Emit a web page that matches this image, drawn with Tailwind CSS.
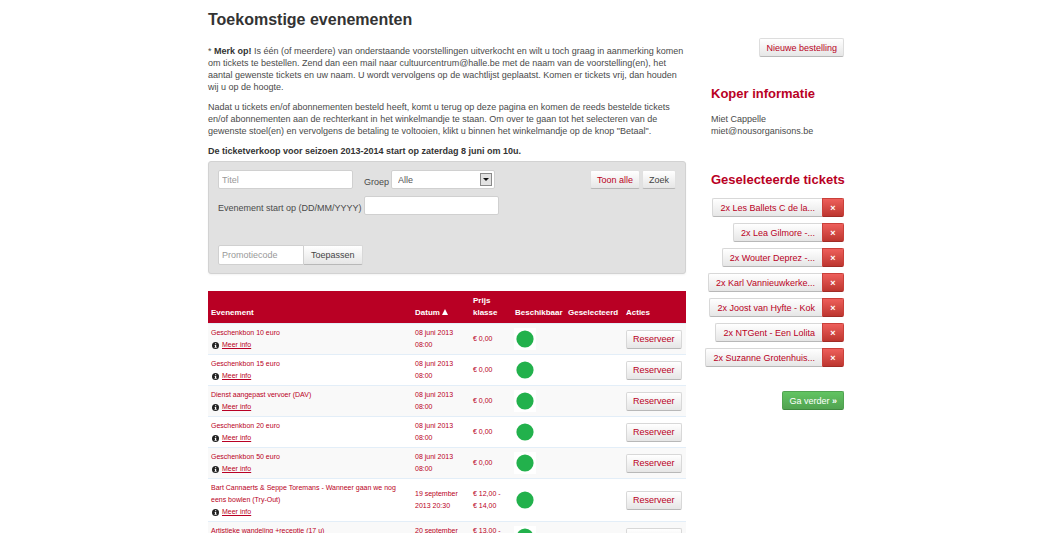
<!DOCTYPE html>
<html lang="nl">
<head>
<meta charset="utf-8">
<meta name="viewport" content="width=device-width, initial-scale=1">
<title>Toekomstige evenementen</title>
<script src="https://cdn.jsdelivr.net/npm/@tailwindcss/browser@4"></script>
</head>
<body class="bg-white text-[9px] leading-3 text-[#4a4a4a] font-['Liberation_Sans',Arial,sans-serif]">
<div class="mx-auto flex max-w-[647px] items-start justify-between pl-[11px]">
  <main class="w-[478px]">
    <h1 class="pt-2 text-[16px] leading-6 font-bold text-[#333]">Toekomstige evenementen</h1>
    <div class="mt-[13px] space-y-2">
      <p>* <strong class="text-[#333]">Merk op!</strong> Is één (of meerdere) van onderstaande voorstellingen uitverkocht en wilt u toch graag in aanmerking komen om tickets te bestellen. Zend dan een mail naar cultuurcentrum@halle.be met de naam van de voorstelling(en), het aantal gewenste tickets en uw naam. U wordt vervolgens op de wachtlijst geplaatst. Komen er tickets vrij, dan houden wij u op de hoogte.</p>
      <p>Nadat u tickets en/of abonnementen besteld heeft, komt u terug op deze pagina en komen de reeds bestelde tickets en/of abonnementen aan de rechterkant in het winkelmandje te staan. Om over te gaan tot het selecteren van de gewenste stoel(en) en vervolgens de betaling te voltooien, klikt u binnen het winkelmandje op de knop "Betaal".</p>
      <p class="font-bold text-[#333]">De ticketverkoop voor seizoen 2013-2014 start op zaterdag 8 juni om 10u.</p>
    </div>

    <form class="mt-1 rounded-[3px] border border-[#d2d2d2] bg-[#e1e1e1] px-[9px] py-2 shadow-xs">
      <div class="flex items-start justify-between">
        <div class="flex items-center">
          <input type="text" aria-label="Titel" placeholder="Titel" class="h-[19px] w-[135px] rounded-[2px] border border-[#d0d0d0] bg-white px-[3px] placeholder:text-[#999]">
          <label for="groep" class="mr-[2px] ml-[11px] pt-1">Groep</label>
          <div class="relative">
            <select id="groep" class="h-[19px] w-[104px] appearance-none rounded-[2px] border border-[#d0d0d0] bg-white px-[6px] text-[#555]"><option>Alle</option></select>
            <svg class="pointer-events-none absolute top-[3px] right-[3px] h-[13px] w-3" viewBox="0 0 12 13"><rect x=".5" y=".5" width="11" height="12" fill="#e2e2e2" stroke="#8a8a8a"/><path d="M3 5h6L6 8z" fill="#111"/></svg>
          </div>
        </div>
        <div class="flex gap-[2px]">
          <button type="button" class="h-[19px] rounded-[2px] border border-[#e0e0e0] border-b-[#b8b8b8] bg-linear-to-b from-white to-[#e6e6e6] px-[6px] text-[#b90024]">Toon alle</button>
          <button type="submit" class="h-[19px] rounded-[2px] border border-[#e0e0e0] border-b-[#b8b8b8] bg-linear-to-b from-white to-[#e6e6e6] px-[6px] text-[#444]">Zoek</button>
        </div>
      </div>
      <div class="mt-[7px] flex items-center gap-[2px]">
        <label for="datum" class="pt-1">Evenement start op (DD/MM/YYYY)</label>
        <input id="datum" type="text" class="h-[19px] w-[135px] rounded-[2px] border border-[#d0d0d0] bg-white px-[3px]">
      </div>
      <div class="mt-[30px] flex">
        <input type="text" aria-label="Promotiecode" placeholder="Promotiecode" class="h-5 w-[86px] rounded-l-[2px] border border-[#d0d0d0] bg-white px-[3px] placeholder:text-[#999]">
        <button type="button" class="h-5 rounded-r-[2px] border border-l-0 border-[#d8d8d8] border-b-[#b8b8b8] bg-linear-to-b from-white to-[#e6e6e6] px-[7px] text-[#444]">Toepassen</button>
      </div>
    </form>

    <table class="mt-[17px] w-full table-fixed border-collapse text-[7px] text-[#b90024]">
      <colgroup><col class="w-[204px]"><col class="w-[58px]"><col class="w-[42px]"><col class="w-[53px]"><col class="w-[58px]"><col></colgroup>
      <thead>
        <tr class="h-8 bg-[#b90024] text-left align-bottom text-[8px] text-white">
          <th class="px-[3px] pb-1">Evenement</th>
          <th class="px-[3px] pb-1">Datum <svg class="inline h-[6px] w-[6px] align-baseline" viewBox="0 0 6 6"><path d="M3 0l3 6H0z" fill="#fff"/></svg></th>
          <th class="px-[3px] pt-1 pb-1">Prijs klasse</th>
          <th class="px-[3px] pb-1">Beschikbaar</th>
          <th class="px-[3px] pb-1">Geselecteerd</th>
          <th class="px-[3px] pb-1">Acties</th>
        </tr>
      </thead>
      <tbody id="events"></tbody>
    </table>
  </main>

  <aside class="flex w-[140px] flex-col items-end pt-[38px]">
    <button type="button" class="h-[19px] rounded-[2px] border border-[#ddd] border-b-[#b8b8b8] bg-linear-to-b from-white to-[#e6e6e6] px-[6px] text-[#b90024]">Nieuwe bestelling</button>
    <section class="mt-7 w-full pl-[7px]">
      <h2 class="text-[13px] leading-[18px] font-bold whitespace-nowrap text-[#b90024]">Koper informatie</h2>
      <p class="mt-[10px]">Miet Cappelle<br>miet@nousorganisons.be</p>
    </section>
    <h2 class="mt-[34px] w-full pl-[7px] text-[13px] leading-[18px] font-bold whitespace-nowrap text-[#b90024]">Geselecteerde tickets</h2>
    <ul id="cart" class="mt-[9px] flex flex-col items-end gap-[6px]"></ul>
    <button type="button" class="mt-6 h-[19px] rounded-[2px] border border-[#51a351] border-b-[#3f8a3f] bg-linear-to-b from-[#62c462] to-[#51a351] px-[6px] text-white">Ga verder <b>»</b></button>
  </aside>
</div>
<script>
const events = [
  ["Geschenkbon 10 euro", "08 juni 2013 08:00", "€ 0,00"],
  ["Geschenkbon 15 euro", "08 juni 2013 08:00", "€ 0,00"],
  ["Dienst aangepast vervoer (DAV)", "08 juni 2013 08:00", "€ 0,00"],
  ["Geschenkbon 20 euro", "08 juni 2013 08:00", "€ 0,00"],
  ["Geschenkbon 50 euro", "08 juni 2013 08:00", "€ 0,00"],
  ["Bart Cannaerts & Seppe Toremans - Wanneer gaan we nog eens bowlen (Try-Out)", "19 september 2013 20:30", "€ 12,00 - € 14,00"],
  ["Artistieke wandeling +receptie (17 u)", "20 september 2013 17:00", "€ 13,00 - € 15,00"]
];
document.getElementById("events").innerHTML = events.map(([name, date, price]) => `
  <tr class="border-t border-[#e3eef8] odd:bg-[#f9f9f9]">
    <td class="px-[3px] py-[3px]">${name.replace("&", "&amp;")}
      <div class="flex items-center gap-[3px]">
        <svg class="ml-px h-[7px] w-[7px]" viewBox="0 0 14 14"><circle cx="7" cy="7" r="7" fill="#222"/><path d="M6 2.5h2.4v2H6zM5 5.8h3.4v4.4h1v1.4H5v-1.4h1V7.200H5z" fill="#fff"/></svg>
        <a href="#" class="underline">Meer info</a>
      </div></td>
    <td class="px-[3px] py-[3px]">${date.replace("2013 08", "2013<br>08")}</td>
    <td class="px-[3px] py-[3px]">${price.replace("- €", "-<br>€").replace(/€ /g, "€&nbsp;")}</td>
    <td class="px-[2px] py-[3px]"><svg class="block h-[22px] w-[22px]" viewBox="0 0 22 22" role="img" aria-label="Beschikbaar"><path d="M0 0h22v22H0z" fill="#fff"/><circle cx="11" cy="11" r="8.600" fill="#22b14c"/></svg></td>
    <td></td>
    <td class="px-[3px] py-[3px]"><button type="button" class="block h-[19px] rounded-[2px] border border-[#d8d8d8] border-b-[#b8b8b8] bg-linear-to-b from-white to-[#e6e6e6] px-[6px] text-[9px] text-[#b90024]">Reserveer</button></td>
  </tr>`).join("");
const cart = ["2x Les Ballets C de la...", "2x Lea Gilmore -...", "2x Wouter Deprez -...", "2x Karl Vannieuwkerke...", "2x Joost van Hyfte - Kok", "2x NTGent - Een Lolita", "2x Suzanne Grotenhuis..."];
document.getElementById("cart").innerHTML = cart.map(t => `
  <li class="flex">
    <button type="button" class="h-[19px] rounded-l-[2px] border border-r-0 border-[#d8d8d8] border-b-[#b8b8b8] bg-linear-to-b from-white to-[#e6e6e6] px-[7px] whitespace-nowrap text-[#b90024]">${t}</button>
    <button type="button" aria-label="Verwijder ${t}" class="h-[19px] w-[22px] rounded-r-[2px] border border-[#c9403a] border-b-[#a02c27] bg-linear-to-b from-[#ee5f5b] to-[#bd362f] text-[9px] font-bold text-white">×</button>
  </li>`).join("");
</script>
</body>
</html>
